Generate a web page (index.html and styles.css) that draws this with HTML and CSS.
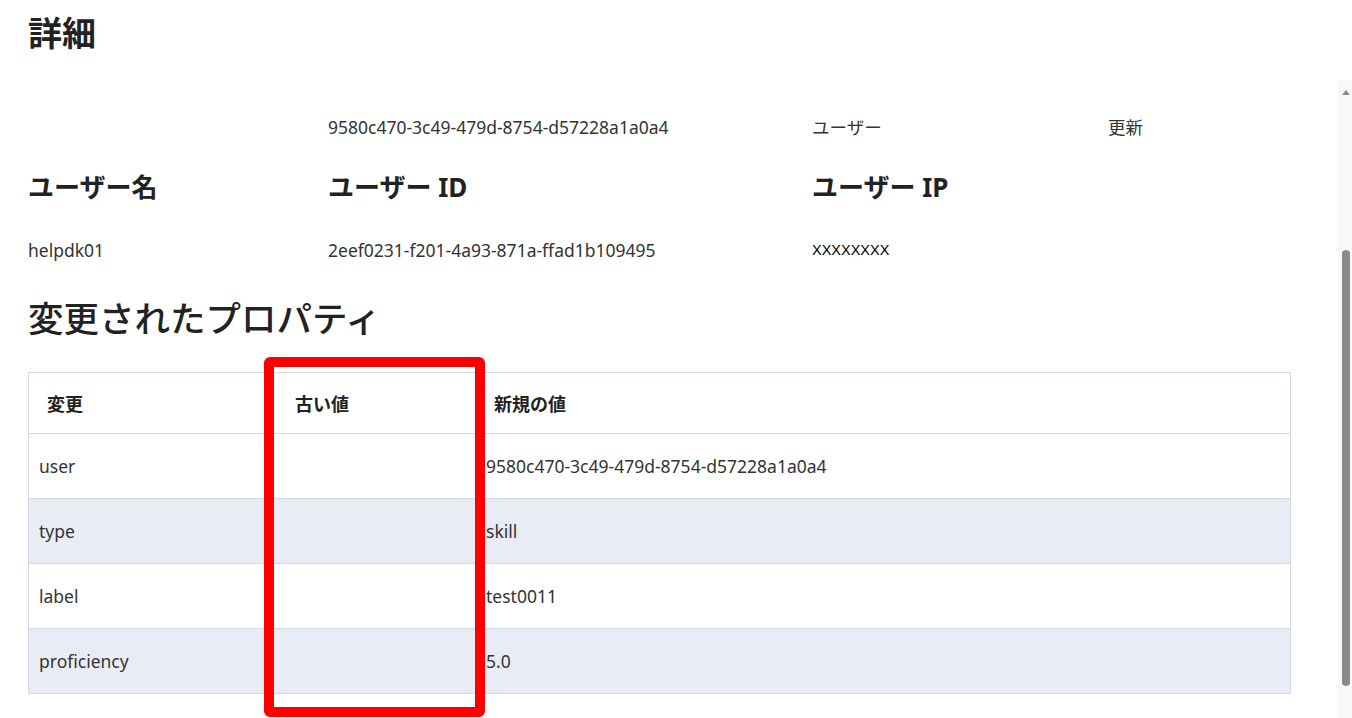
FILE: index.html
```html
<!DOCTYPE html>
<html lang="ja">
<head>
    <meta charset="UTF-8">
    <meta name="viewport" content="width=device-width, initial-scale=1.0">
    <title>詳細</title>
    <link rel="stylesheet" href="styles.css">
</head>
<body>
    <div class="page">
        <h1 class="title">詳細</h1>

        <div class="meta-row">
            <span></span>
            <span>9580c470-3c49-479d-8754-d57228a1a0a4</span>
            <span>ユーザー</span>
            <span>更新</span>
        </div>

        <div class="info-grid">
            <h3>ユーザー名</h3>
            <h3>ユーザー ID</h3>
            <h3>ユーザー IP</h3>
            <div class="value">helpdk01</div>
            <div class="value">2eef0231-f201-4a93-871a-ffad1b109495</div>
            <div class="value ip">XXXXXXXX</div>
        </div>

        <h2 class="section-title">変更されたプロパティ</h2>

        <table class="changes">
            <thead>
                <tr>
                    <th class="col-key">変更</th>
                    <th class="col-old">古い値</th>
                    <th>新規の値</th>
                </tr>
            </thead>
            <tbody>
                <tr><td>user</td><td></td><td>9580c470-3c49-479d-8754-d57228a1a0a4</td></tr>
                <tr><td>type</td><td></td><td>skill</td></tr>
                <tr><td>label</td><td></td><td>test0011</td></tr>
                <tr><td>proficiency</td><td></td><td>5.0</td></tr>
            </tbody>
        </table>
    </div>

    <!-- annotation box around the old value column -->
    <div class="highlight"></div>

    <div class="scrollbar">
        <div class="scroll-arrow"></div>
        <div class="scroll-thumb"></div>
    </div>
</body>
</html>
```

FILE: styles.css
```css
body {
    margin: 0;
    font-family: "Noto Sans", "Noto Sans CJK JP", sans-serif;
    color: #333;
    background-color: #fff;
    overflow: hidden;
}
.page {
    padding: 11px 28px 0 28px;
}
.title {
    margin: 0;
    font-size: 34px;
    line-height: 44px;
    font-weight: 700;
    color: #222;
}
.meta-row {
    display: grid;
    grid-template-columns: 300px 484px 296px 1fr;
    margin-top: 60px;
    font-size: 17.5px;
    line-height: 24px;
}
.info-grid {
    display: grid;
    grid-template-columns: 300px 484px 1fr;
    margin-top: 32px;
}
.info-grid h3 {
    margin: 0;
    font-size: 26px;
    line-height: 32px;
    font-weight: 700;
    color: #222;
}
.info-grid .value {
    margin-top: 35px;
    font-size: 17.5px;
    line-height: 24px;
}
.info-grid .ip {
    font-family: "Liberation Sans", Arial, sans-serif;
    font-size: 14.5px;
    color: #000;
}
.section-title {
    margin: 34px 0 0 0;
    font-size: 35.5px;
    line-height: 44px;
    font-weight: 500;
    color: #222;
}
.changes {
    margin-top: 32px;
    width: 1263px;
    border-collapse: collapse;
    border: 1px solid #d3d9e6;
    font-size: 17.5px;
}
.changes th {
    height: 60px;
    padding: 0 18px;
    text-align: left;
    font-size: 18px;
    font-weight: 700;
    color: #222;
}
.changes .col-key {
    width: 212px;
}
.changes .col-old {
    width: 163px;
}
.changes td {
    height: 64px;
    padding: 0 10px;
    border-top: 1px solid #d3d9e6;
}
.changes tbody tr:nth-child(even) td {
    background-color: #e9ecf4;
}
.highlight {
    position: absolute;
    left: 264px;
    top: 357px;
    width: 201px;
    height: 340px;
    border: 10px solid #ff0000;
    border-radius: 6px;
}
.scrollbar {
    position: absolute;
    right: 0;
    top: 80px;
    width: 14px;
    height: 638px;
    background-color: #f8f8f8;
}
.scroll-arrow {
    margin: 10px 0 0 4px;
    width: 0;
    height: 0;
    border-left: 4px solid transparent;
    border-right: 4px solid transparent;
    border-bottom: 5px solid #8a8a8a;
}
.scroll-thumb {
    position: absolute;
    left: 4px;
    top: 170px;
    width: 8px;
    height: 436px;
    background-color: #8a8a8a;
    border-radius: 4px;
}
```
